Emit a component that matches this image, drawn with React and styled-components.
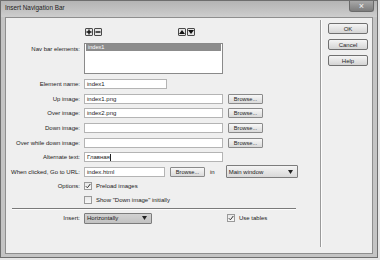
import styled, { createGlobalStyle } from "styled-components";

const GlobalStyle = createGlobalStyle`
  html, body {
    margin: 0;
    padding: 0;
    background: #e6e6e6;
  }
  * {
    box-sizing: border-box;
  }
`;

const fields = [
  { label: "Element name:", value: "index1", width: 83 },
  { label: "Up image:", value: "index1.png", width: 139, browse: true },
  { label: "Over image:", value: "index2.png", width: 139, browse: true },
  { label: "Down image:", value: "", width: 139, browse: true },
  { label: "Over while down image:", value: "", width: 139, browse: true },
  { label: "Alternate text:", value: "Главная", width: 139, caret: true },
];

const PlusIcon = () => (
  <svg width="6" height="6" viewBox="0 0 6 6">
    <path d="M3 0.5v5M0.5 3h5" stroke="#111" strokeWidth="1.4" />
  </svg>
);

const MinusIcon = () => (
  <svg width="6" height="6" viewBox="0 0 6 6">
    <path d="M0.5 3h5" stroke="#111" strokeWidth="1.4" />
  </svg>
);

const UpIcon = () => (
  <svg width="6" height="6" viewBox="0 0 6 6">
    <path d="M3 1L6 5H0z" fill="#111" />
  </svg>
);

const DownIcon = () => (
  <svg width="6" height="6" viewBox="0 0 6 6">
    <path d="M0 1h6L3 5z" fill="#111" />
  </svg>
);

const CheckMark = () => (
  <svg width="6" height="6" viewBox="0 0 6 6">
    <path d="M0.8 3.2L2.4 4.8L5.3 1" stroke="#333" strokeWidth="1" fill="none" />
  </svg>
);

const Caret = () => (
  <svg width="5" height="4" viewBox="0 0 5 4">
    <path d="M0 0h5L2.5 4z" fill="#222" />
  </svg>
);

const App = () => {
  return (
    <>
      <GlobalStyle />
      <Window>
        <TitleBar>
          <Title>Insert Navigation Bar</Title>
          <CloseButton>×</CloseButton>
        </TitleBar>
        <Body>
          <FormArea>
            <Row $h={8}>
              <Label />
              <IconGroup>
                <IconButton><PlusIcon /></IconButton>
                <IconButton><MinusIcon /></IconButton>
              </IconGroup>
              <IconGroup $ml={76}>
                <IconButton><UpIcon /></IconButton>
                <IconButton><DownIcon /></IconButton>
              </IconGroup>
            </Row>

            <Row $h={31} $mt={7} $top>
              <Label $pt={2}>Nav bar elements:</Label>
              <ListBox>
                <ListItem>index1</ListItem>
              </ListBox>
            </Row>

            {fields.map(({ label, value, width, browse, caret }, i) => (
              <Row key={i} $h={10} $mt={i === 0 ? 5 : 4.66}>
                <Label>{label}</Label>
                <Field $w={width}>
                  {value}
                  {caret && <TextCaret />}
                </Field>
                {browse && <Browse $ml={5}>Browse...</Browse>}
              </Row>
            ))}

            <Row $h={10} $mt={4.66}>
              <Label>When clicked, Go to URL:</Label>
              <Field $w={81}>index.html</Field>
              <Browse $ml={5}>Browse...</Browse>
              <InText>in</InText>
              <Select $w={72} $h={13} $ml={11}>
                Main window
                <Caret />
              </Select>
            </Row>

            <Row $h={8} $mt={5}>
              <Label>Options:</Label>
              <CheckBox>
                <CheckMark />
              </CheckBox>
              <CheckText>Preload images</CheckText>
            </Row>

            <Row $h={8} $mt={6}>
              <Label />
              <CheckBox />
              <CheckText>Show "Down image" initially</CheckText>
            </Row>

            <Separator />

            <Row $h={11} $mt={3}>
              <Label>Insert:</Label>
              <Select $w={68} $h={11} $dark>
                Horizontally
                <Caret />
              </Select>
              <CheckBox $ml={75}>
                <CheckMark />
              </CheckBox>
              <CheckText>Use tables</CheckText>
            </Row>
          </FormArea>

          <VSeparator />

          <ButtonColumn>
            <DialogButton>OK</DialogButton>
            <DialogButton>Cancel</DialogButton>
            <DialogButton>Help</DialogButton>
          </ButtonColumn>
        </Body>
      </Window>
    </>
  );
};

const Window = styled.div`
  width: 378px;
  height: 258px;
  display: flex;
  flex-direction: column;
  background: #c4c4c4;
  border: 1px solid #6e6e6e;
  padding: 0 4px 3px 4px;
  font-family: "Liberation Sans", Arial, sans-serif;
  color: #1e1e1e;
`;

const TitleBar = styled.div`
  height: 16px;
  margin: 0 -4px;
  padding-left: 4px;
  display: flex;
  align-items: flex-start;
  justify-content: space-between;
  background: linear-gradient(to bottom, #b4b4b4, #cdcdcd);
`;

const Title = styled.div`
  font-size: 6.4px;
  line-height: 14px;
  color: #222;
`;

const CloseButton = styled.div`
  width: 25px;
  height: 11px;
  margin-right: 3px;
  display: flex;
  align-items: center;
  justify-content: center;
  background: linear-gradient(to bottom, #a8a8a8, #7c7c7c);
  border: 1px solid #6a6a6a;
  border-top: none;
  border-radius: 0 0 3px 3px;
  color: #f4f4f4;
  font-size: 9px;
  line-height: 9px;
`;

const Body = styled.div`
  flex: 1;
  display: flex;
  background: #efefef;
  border: 1px solid #8e8e8e;
`;

const FormArea = styled.div`
  width: 314px;
  padding-top: 10px;
  display: flex;
  flex-direction: column;
`;

const Row = styled.div`
  height: ${(p) => p.$h}px;
  margin-top: ${(p) => p.$mt || 0}px;
  display: flex;
  align-items: ${(p) => (p.$top ? "flex-start" : "center")};
  gap: 0;
`;

const Label = styled.div`
  width: 74px;
  flex-shrink: 0;
  margin-right: 4px;
  padding-top: ${(p) => p.$pt || 0}px;
  text-align: right;
  font-size: 6px;
  line-height: 8px;
  white-space: nowrap;
  color: #222;
`;

const IconGroup = styled.div`
  display: flex;
  gap: 1px;
  margin-left: ${(p) => p.$ml || 1}px;
`;

const IconButton = styled.div`
  width: 8px;
  height: 8px;
  display: flex;
  align-items: center;
  justify-content: center;
  background: #e4e4e4;
  border: 1px solid #4a4a4a;
  border-radius: 1px;
`;

const ListBox = styled.div`
  width: 139px;
  height: 31px;
  background: #fff;
  border: 1px solid #8a8a8a;
  padding: 0 1px;
`;

const ListItem = styled.div`
  height: 7px;
  background: #8c8c8c;
  color: #fff;
  font-size: 5.6px;
  line-height: 7px;
  padding-left: 2px;
`;

const Field = styled.div`
  width: ${(p) => p.$w}px;
  height: 10px;
  flex-shrink: 0;
  display: flex;
  align-items: center;
  background: #fff;
  border: 1px solid #b4b4b4;
  padding: 0 2px;
  font-size: 6px;
  color: #222;
  white-space: nowrap;
`;

const TextCaret = styled.span`
  width: 1px;
  height: 7px;
  background: #222;
`;

const Browse = styled.div`
  width: 35px;
  height: 10px;
  flex-shrink: 0;
  margin-left: ${(p) => p.$ml}px;
  display: flex;
  align-items: center;
  justify-content: center;
  background: linear-gradient(to bottom, #f7f7f7, #dadada);
  border: 1px solid #8a8a8a;
  border-radius: 1px;
  font-size: 5.6px;
  color: #222;
`;

const InText = styled.div`
  margin-left: 5px;
  font-size: 6px;
  color: #222;
`;

const Select = styled.div`
  width: ${(p) => p.$w}px;
  height: ${(p) => p.$h}px;
  flex-shrink: 0;
  margin-left: ${(p) => p.$ml || 0}px;
  display: flex;
  align-items: center;
  justify-content: space-between;
  padding: 0 4px 0 2px;
  background: ${(p) =>
    p.$dark
      ? "linear-gradient(to bottom, #d2d2d2, #c2c2c2)"
      : "linear-gradient(to bottom, #f4f4f4, #d8d8d8)"};
  border: 1px solid #7c7c7c;
  border-radius: 1px;
  font-size: 6px;
  color: #1a1a1a;
  white-space: nowrap;
`;

const CheckBox = styled.div`
  width: 8px;
  height: 8px;
  flex-shrink: 0;
  margin-left: ${(p) => p.$ml || 0}px;
  display: flex;
  align-items: center;
  justify-content: center;
  background: linear-gradient(to bottom, #e8e8e8, #f8f8f8);
  border: 1px solid #9a9a9a;
`;

const CheckText = styled.div`
  margin-left: 4px;
  font-size: 6px;
  color: #222;
  white-space: nowrap;
`;

const Separator = styled.div`
  width: 284px;
  height: 2px;
  margin: 4px 0 0 6px;
  border-top: 1px solid #7a7a7a;
  border-bottom: 1px solid #fdfdfd;
`;

const VSeparator = styled.div`
  width: 2px;
  margin: 2px 0 6px 0;
  border-left: 1px solid #9a9a9a;
  border-right: 1px solid #fdfdfd;
`;

const ButtonColumn = styled.div`
  padding: 5px 0 0 6px;
  display: flex;
  flex-direction: column;
  gap: 5px;
`;

const DialogButton = styled.div`
  width: 40px;
  height: 11px;
  display: flex;
  align-items: center;
  justify-content: center;
  background: linear-gradient(to bottom, #f5f5f5, #d4d4d4);
  border: 1px solid #707070;
  border-radius: 2px;
  font-size: 6px;
  color: #1e1e1e;
`;

export default App;
